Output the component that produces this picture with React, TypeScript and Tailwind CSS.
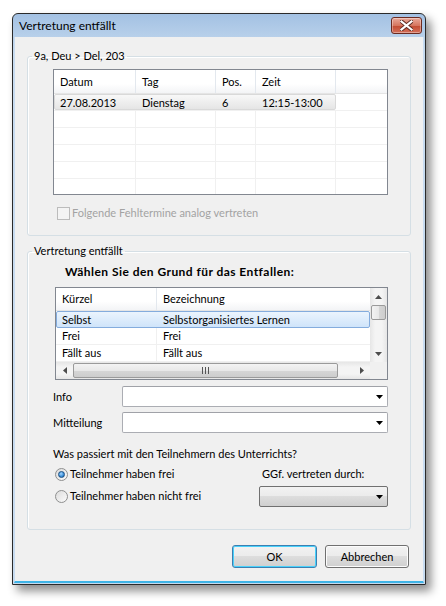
import React from "react";

const DownTri = () => (
  <svg width="7" height="4" viewBox="0 0 7 4">
    <polygon points="0,0 7,0 3.5,4" fill="#000" />
  </svg>
);

function ArrowBtn({ dir }: { dir: "up" | "down" | "left" | "right" }) {
  const pts = {
    up: "0,4 7,4 3.5,0",
    down: "0,0 7,0 3.5,4",
    left: "4,0 4,7 0,3.5",
    right: "0,0 0,7 4,3.5",
  }[dir];
  const vertical = dir === "up" || dir === "down";
  return (
    <div className="flex h-[17px] w-[17px] items-center justify-center">
      <svg width={vertical ? 7 : 4} height={vertical ? 4 : 7} viewBox={vertical ? "0 0 7 4" : "0 0 4 7"}>
        <polygon points={pts} fill="#4d4d4d" />
      </svg>
    </div>
  );
}

function Combo({ width, flat }: { width: string; flat?: boolean }) {
  return (
    <div
      className={`flex h-[21px] ${width} items-center justify-end rounded-[2px] border pr-[4px] ${
        flat
          ? "border-[#707070] bg-[linear-gradient(to_bottom,#f2f2f2_0%,#ebebeb_50%,#dddddd_50%,#cfcfcf_100%)]"
          : "border-[#abadb3] border-t-[#a0a2a8] bg-white"
      }`}
    >
      <DownTri />
    </div>
  );
}

function Radio({ checked, label }: { checked?: boolean; label: string }) {
  return (
    <div className="flex h-[16px] items-center">
      <div className="ml-[2px] flex h-[13px] w-[13px] items-center justify-center rounded-full border border-[#8e8f8f] bg-[linear-gradient(135deg,#dcdcdc,#fbfbfb)]">
        {checked && (
          <div className="h-[7px] w-[7px] rounded-full border border-[#1a4f82] bg-[radial-gradient(circle_at_40%_35%,#a4d6ff,#3a8ed8_60%,#1c5f9c)]" />
        )}
      </div>
      <span className="ml-[2px]">{label}</span>
    </div>
  );
}

const cols = [82, 80, 40, 80];
const rowsTop = [
  { d: "27.08.2013", t: "Dienstag", p: "6", z: "12:15-13:00" },
];

export default function App() {
  return (
    <div className="h-[606px] w-[446px] bg-white pl-[12px] pt-[13px] font-['Lato',sans-serif] text-[11px] leading-[16px] text-black">
      <div className="w-[414px] rounded-t-[6px] border border-[#2a2a2a] bg-[linear-gradient(to_bottom,#a3c1e3,#c7dbef_40px)] shadow-[5px_6px_10px_rgba(0,0,0,0.45)]">
        {/* title bar */}
        <div className="flex h-[23px] items-center justify-between pl-[6px] pr-[3px]">
          <span className="text-[12px]">Vertretung entfällt</span>
          <div className="flex h-[17px] w-[31px] items-center justify-center rounded-[3px] border border-[#6b2a20] bg-[linear-gradient(to_bottom,#e9a99b,#d6765f_50%,#c24a31_51%,#d4705a)] shadow-[inset_0_0_0_1px_rgba(255,255,255,0.35)]">
            <svg width="13" height="11" viewBox="0 0 13 11">
              <path d="M1.5 1.5 L11.5 9.5 M11.5 1.5 L1.5 9.5" stroke="#5a2a22" strokeWidth="4" strokeLinecap="square" />
              <path d="M1.5 1.5 L11.5 9.5 M11.5 1.5 L1.5 9.5" stroke="#fff" strokeWidth="2.2" strokeLinecap="square" />
            </svg>
          </div>
        </div>

        {/* client */}
        <div className="mx-[1px] mb-[1px] border-x border-b-2 border-x-[#c8dcf1] border-b-[#3fb4e6]">
          <div className="bg-[#f0f0f0] pb-[13px] pl-[12px] pr-[13px] pt-[11px]">
            {/* group 1 */}
            <fieldset className="rounded-[3px] border border-[#d5dfe5] pb-[14px] pl-[25px] pr-[22px] pt-[5px] shadow-[inset_1px_1px_0_#fff]">
              <legend className="-ml-[21px] px-[2px]">9a, Deu &gt; Del, 203</legend>
              <div className="h-[126px] w-[335px] overflow-hidden border border-[#828790] bg-white">
                <div className="flex h-[24px] border-b border-[#e5e5e5] bg-[linear-gradient(to_bottom,#ffffff,#ffffff_60%,#f3f4f6)]">
                  {["Datum", "Tag", "Pos.", "Zeit"].map((h, i) => (
                    <div
                      key={h}
                      style={{ width: cols[i] }}
                      className="flex items-center border-r border-[#e3e8ee] pl-[6px]"
                    >
                      {h}
                    </div>
                  ))}
                  <div className="flex-1" />
                </div>
                {rowsTop.map((r) => (
                  <div key={r.d} className="flex h-[17px] border-b border-[#f0f0f0]">
                    <div className="flex w-[282px] rounded-[2px] border border-[#d9d9d9] bg-[linear-gradient(to_bottom,#f8f8f8,#e5e5e5)]">
                      <div className="w-[81px] pl-[5px] leading-[15px]">{r.d}</div>
                      <div className="w-[80px] pl-[6px] leading-[15px]">{r.t}</div>
                      <div className="w-[40px] pl-[6px] leading-[15px]">{r.p}</div>
                      <div className="w-[79px] pl-[6px] leading-[15px]">{r.z}</div>
                    </div>
                  </div>
                ))}
                {[0, 1, 2, 3, 4].map((i) => (
                  <div key={i} className="flex h-[17px] border-b border-[#f0f0f0]">
                    {cols.map((w, j) => (
                      <div key={j} style={{ width: w }} className="border-r border-[#f0f0f0]" />
                    ))}
                  </div>
                ))}
              </div>
              <div className="mt-[10px] flex h-[16px] items-center pl-[4px] text-[#a3a3a3]">
                <div className="h-[13px] w-[13px] border border-[#bcbcbc] bg-[#f4f4f4]" />
                <span className="ml-[2px]">Folgende Fehltermine analog vertreten</span>
              </div>
            </fieldset>

            {/* group 2 */}
            <fieldset className="mt-[7px] rounded-[3px] border border-[#d5dfe5] pb-[22px] pl-[25px] pr-[22px] pt-[5px] shadow-[inset_1px_1px_0_#fff]">
              <legend className="-ml-[21px] px-[2px]">Vertretung entfällt</legend>
              <div className="ml-[12px] text-[12px] font-bold tracking-[0.45px]">Wählen Sie den Grund für das Entfallen:</div>

              <div className="ml-[2px] mt-[7px] w-[333px] border border-[#828790] bg-white">
                <div className="flex">
                  <div className="flex-1">
                    <div className="flex h-[23px] border-b border-[#e5e5e5] bg-[linear-gradient(to_bottom,#ffffff,#ffffff_60%,#f3f4f6)]">
                      <div className="flex w-[101px] items-center border-r border-[#e3e8ee] pl-[6px]">Kürzel</div>
                      <div className="flex flex-1 items-center pl-[6px]">Bezeichnung</div>
                    </div>
                    <div className="flex h-[17px] rounded-[2px] border border-[#84acdd] bg-[linear-gradient(to_bottom,#ebf4fd,#cfe4fa)] leading-[15px]">
                      <div className="w-[100px] pl-[5px]">Selbst</div>
                      <div className="flex-1 pl-[6px]">Selbstorganisiertes Lernen</div>
                    </div>
                    {[
                      ["Frei", "Frei"],
                      ["Fällt aus", "Fällt aus"],
                    ].map(([a, b]) => (
                      <div key={a} className="flex h-[17px] border-b border-[#f0f0f0] leading-[16px]">
                        <div className="w-[101px] border-r border-[#f0f0f0] pl-[6px]">{a}</div>
                        <div className="flex-1 pl-[6px]">{b}</div>
                      </div>
                    ))}
                  </div>
                  {/* vertical scrollbar */}
                  <div className="flex w-[17px] flex-col bg-[linear-gradient(to_right,#e6e6e6,#f4f4f4_30%,#f4f4f4_70%,#e6e6e6)]">
                    <ArrowBtn dir="up" />
                    <div className="mx-[1px] h-[15px] rounded-[2px] border border-[#9a9a9a] bg-[linear-gradient(to_right,#f3f3f3,#e8e8e8_50%,#d6d6d6_51%,#cdcdcd)]" />
                    <div className="flex-1" />
                    <ArrowBtn dir="down" />
                  </div>
                </div>
                {/* horizontal scrollbar */}
                <div className="flex h-[17px]">
                  <div className="flex flex-1 bg-[linear-gradient(to_bottom,#e6e6e6,#f4f4f4_30%,#f4f4f4_70%,#e6e6e6)]">
                    <ArrowBtn dir="left" />
                    <div className="my-[1px] flex w-[265px] items-center justify-center rounded-[2px] border border-[#9a9a9a] bg-[linear-gradient(to_bottom,#f3f3f3,#e8e8e8_50%,#d6d6d6_51%,#cdcdcd)]">
                      <svg width="7" height="7" viewBox="0 0 7 7">
                        <path d="M0.5 0 V7 M3.5 0 V7 M6.5 0 V7" stroke="#555" strokeWidth="1" />
                      </svg>
                    </div>
                    <div className="flex-1" />
                    <ArrowBtn dir="right" />
                  </div>
                  <div className="w-[17px] bg-[#f0f0f0]" />
                </div>
              </div>

              <div className="mt-[6px] flex items-center justify-between">
                <span>Info</span>
                <Combo width="w-[266px]" />
              </div>
              <div className="mt-[5px] flex items-center justify-between">
                <span>Mitteilung</span>
                <Combo width="w-[266px]" />
              </div>

              <div className="mt-[13px]">Was passiert mit den Teilnehmern des Unterrichts?</div>
              <div className="mt-[4px] flex justify-between">
                <div className="flex flex-col gap-[6px]">
                  <Radio checked label="Teilnehmer haben frei" />
                  <Radio label="Teilnehmer haben nicht frei" />
                </div>
                <div className="w-[129px]">
                  <div className="pl-[3px]">GGf. vertreten durch:</div>
                  <div className="mt-[4px]">
                    <Combo width="w-[129px]" flat />
                  </div>
                </div>
              </div>
            </fieldset>

            <div className="mt-[15px] flex justify-end gap-[8px] pr-[1px]">
              <button className="h-[23px] w-[85px] rounded-[3px] border border-[#3c7fb1] bg-[linear-gradient(to_bottom,#f2f2f2_0%,#ebebeb_50%,#dddddd_50%,#cfcfcf_100%)] shadow-[inset_0_0_0_1px_#48d1fb]">
                OK
              </button>
              <button className="h-[23px] w-[84px] rounded-[3px] border border-[#707070] bg-[linear-gradient(to_bottom,#f2f2f2_0%,#ebebeb_50%,#dddddd_50%,#cfcfcf_100%)] shadow-[inset_0_0_0_1px_#fcfcfc]">
                Abbrechen
              </button>
            </div>
          </div>
        </div>
      </div>
    </div>
  );
}
